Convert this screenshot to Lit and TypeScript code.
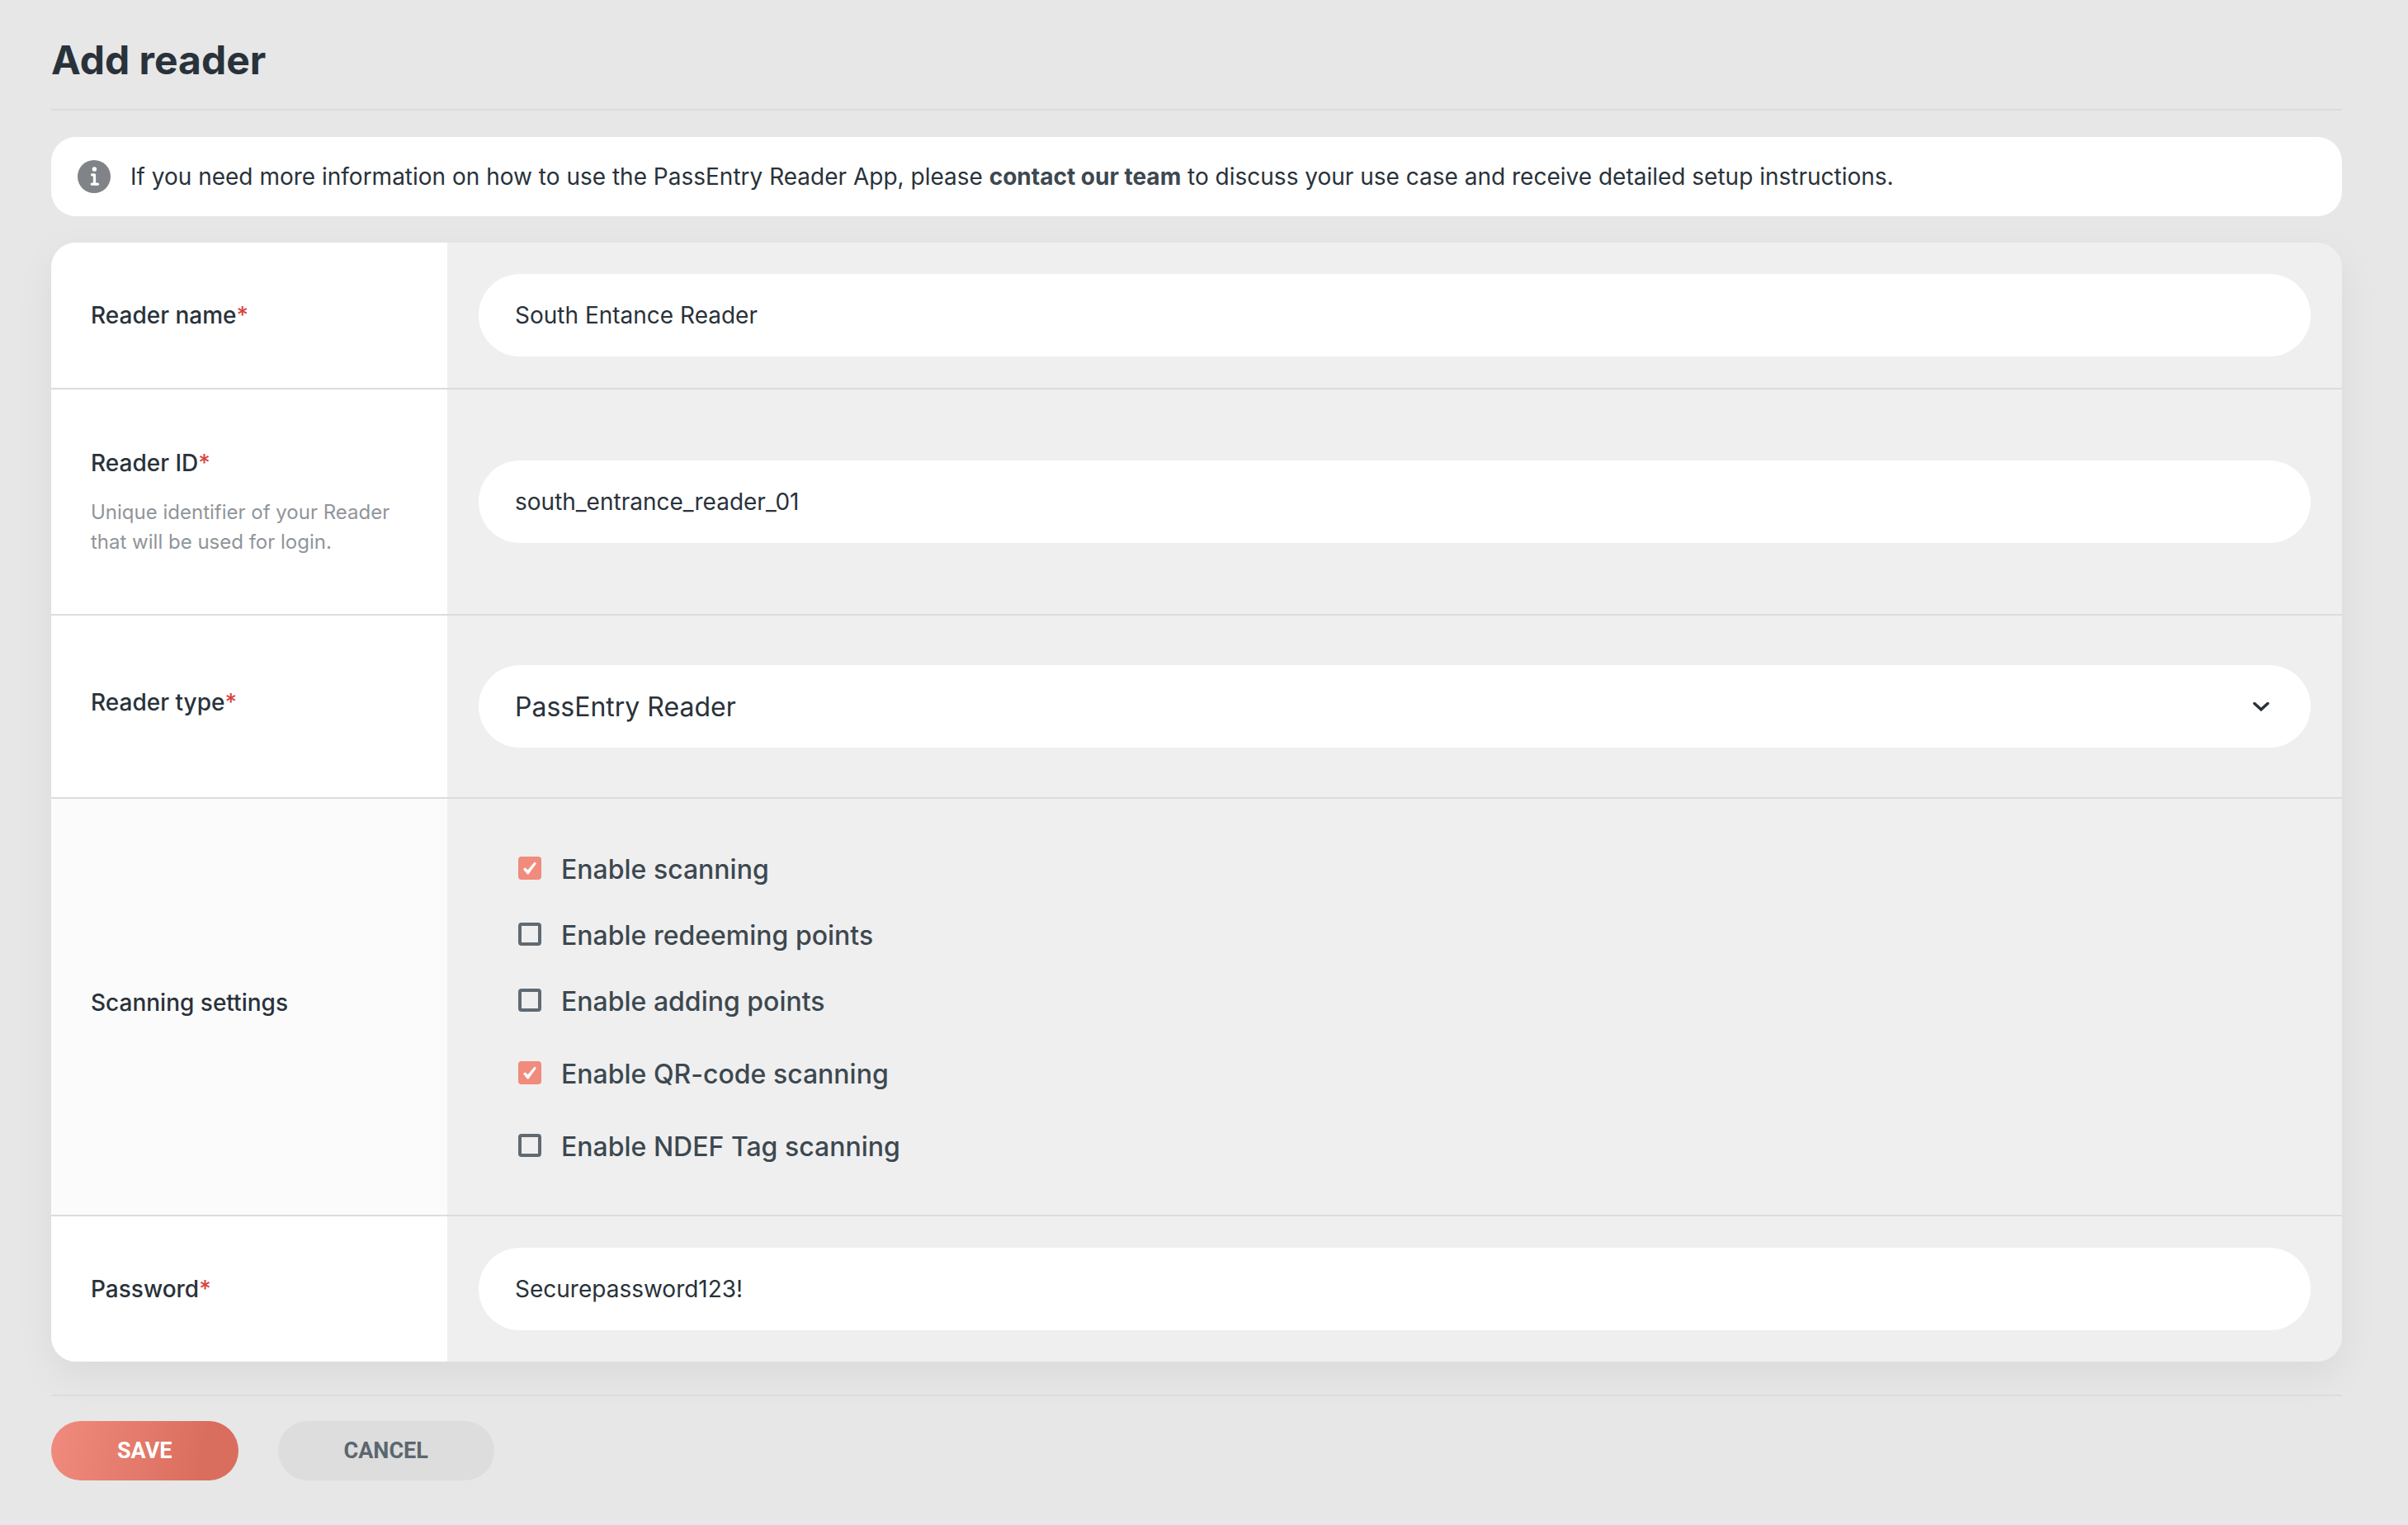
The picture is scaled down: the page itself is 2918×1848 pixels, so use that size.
import { LitElement, html, css, nothing } from "lit";
import { customElement } from "lit/decorators.js";

interface Option {
  id: string;
  label: string;
  checked: boolean;
}

@customElement("app-root")
export class AppRoot extends LitElement {
  private pointOptions: Option[] = [
    { id: "scan", label: "Enable scanning", checked: true },
    { id: "redeem", label: "Enable redeeming points", checked: false },
    { id: "add", label: "Enable adding points", checked: false },
  ];

  private tagOptions: Option[] = [
    { id: "qr", label: "Enable QR-code scanning", checked: true },
    { id: "ndef", label: "Enable NDEF Tag scanning", checked: false },
  ];

  static styles = css`
    :host {
      display: block;
      box-sizing: border-box;
      min-height: 100vh;
      padding: 40px 80px 54px 62px;
      background: #e7e7e7;
      color: #29323a;
      font-family: Inter, "Liberation Sans", sans-serif;
      font-size: 28px;
      line-height: 40px;
    }
    *,
    *::before {
      box-sizing: border-box;
    }
    .title {
      margin: 0;
      padding-bottom: 26px;
      border-bottom: 2px solid #dcdcdc;
      font-size: 48px;
      line-height: 66px;
      font-weight: 700;
    }
    .notice {
      display: flex;
      align-items: center;
      gap: 24px;
      margin: 32px 0;
      padding: 28px 32px;
      border-radius: 30px;
      background: #fff;
    }
    .notice-icon {
      flex: none;
      width: 40px;
      height: 40px;
    }
    .notice-text {
      margin: 0;
    }
    .notice-link {
      color: #3d4850;
      font-weight: 700;
      text-decoration: none;
    }
    .card {
      border-radius: 30px;
      overflow: hidden;
      background: #efefef;
      box-shadow: 0 16px 48px rgba(0, 0, 0, 0.06);
    }
    .row {
      display: grid;
      grid-template-columns: 480px 1fr;
    }
    .row + .row {
      border-top: 2px solid #dcdcdc;
    }
    .side {
      display: flex;
      flex-direction: column;
      justify-content: center;
      gap: 22px;
      padding: 0 48px;
      background: #fff;
    }
    .side.raised {
      padding-bottom: 10px;
    }
    .side.muted {
      background: #fbfbfb;
    }
    .label {
      font-weight: 500;
    }
    .required {
      color: #d9443f;
    }
    .hint {
      margin: 0;
      color: #8f959a;
      font-size: 24px;
      line-height: 36px;
    }
    .field {
      padding: 38px;
    }
    .field.tall {
      padding: 86px 38px;
    }
    .field.medium {
      padding: 60px 38px;
    }
    .control {
      display: block;
      width: 100%;
      height: 100px;
      margin: 0;
      padding: 0 44px;
      border: 0;
      border-radius: 50px;
      outline: none;
      background: #fff;
      color: #29323a;
      font-family: inherit;
      font-size: 28px;
      font-weight: 400;
    }
    .select-wrap {
      display: grid;
      align-items: center;
    }
    .select-wrap > * {
      grid-area: 1 / 1;
    }
    .select {
      appearance: none;
      font-size: 32px;
    }
    .chevron {
      justify-self: end;
      width: 20px;
      height: 12px;
      margin-right: 50px;
      pointer-events: none;
    }
    .options {
      display: flex;
      flex-direction: column;
      gap: 48px;
      padding: 66px 86px 62px;
    }
    .group {
      display: flex;
      flex-direction: column;
      gap: 40px;
    }
    .option {
      display: flex;
      align-items: flex-start;
      gap: 24px;
      font-size: 32px;
      font-weight: 500;
      color: #3d4850;
    }
    .box {
      appearance: none;
      display: grid;
      place-items: center;
      flex: none;
      width: 28px;
      height: 28px;
      margin: 4px 0 0;
      border: 4px solid #606a72;
      border-radius: 4px;
    }
    .box:checked {
      border-color: #f08b7d;
      background: #f08b7d;
    }
    .box:checked::before {
      content: "";
      width: 16px;
      height: 16px;
      background: #fff;
      clip-path: polygon(0 58%, 15% 46%, 35% 64%, 86% 3%, 100% 14%, 40% 97%, 31% 97%);
    }
    .actions {
      display: flex;
      gap: 48px;
      margin-top: 40px;
      padding-top: 30px;
      border-top: 2px solid #dcdcdc;
    }
    .button {
      height: 72px;
      padding: 0 80px;
      border: 0;
      border-radius: 36px;
      background: #dddddd;
      color: #5c666e;
      font-family: Roboto, "Liberation Sans", sans-serif;
      font-size: 27px;
      font-weight: 700;
    }
    .button.primary {
      background: linear-gradient(100deg, #f08b7d 0%, #da6e5e 80%);
      color: #fff;
    }
  `;

  private side(id: string, label: string, hint = "", modifier = "") {
    return html`<div class="side ${modifier}">
      <label class="label" for=${id}>${label}<span class="required">*</span></label>
      ${hint ? html`<p class="hint">${hint}</p>` : nothing}
    </div>`;
  }

  private option(o: Option) {
    return html`<label class="option">
      <input class="box" type="checkbox" name=${o.id} ?checked=${o.checked} />
      <span>${o.label}</span>
    </label>`;
  }

  render() {
    return html`
      <h1 class="title">Add reader</h1>
      <div class="notice">
        <svg class="notice-icon" viewBox="0 0 40 40" aria-hidden="true">
          <circle cx="20" cy="20" r="20" fill="#808488" />
          <circle cx="20.400" cy="11" r="2.700" fill="#fff" />
          <path d="M17.500 17.800H20.500V29M17.300 29.200H24.500" fill="none" stroke="#fff" stroke-width="3.200" stroke-linecap="round" stroke-linejoin="round" />
        </svg>
        <p class="notice-text">
          If you need more information on how to use the PassEntry Reader App, please
          <a class="notice-link" href="#contact">contact our team</a>
          to discuss your use case and receive detailed setup instructions.
        </p>
      </div>
      <form>
        <div class="card">
          <div class="row">
            ${this.side("name", "Reader name")}
            <div class="field"><input class="control" id="name" type="text" value="South Entance Reader" /></div>
          </div>
          <div class="row">
            ${this.side("reader-id", "Reader ID", "Unique identifier of your Reader that will be used for login.")}
            <div class="field tall"><input class="control" id="reader-id" type="text" value="south_entrance_reader_01" /></div>
          </div>
          <div class="row">
            ${this.side("type", "Reader type", "", "raised")}
            <div class="field medium select-wrap">
              <select class="control select" id="type"><option>PassEntry Reader</option></select>
              <svg class="chevron" viewBox="0 0 20 12" aria-hidden="true">
                <path d="M2 2.500L10 9.800L18 2.500" fill="none" stroke="#29323a" stroke-width="3.500" stroke-linecap="round" />
              </svg>
            </div>
          </div>
          <div class="row" role="group" aria-labelledby="scan-label">
            <div class="side raised muted"><span class="label" id="scan-label">Scanning settings</span></div>
            <div class="options">
              <div class="group">${this.pointOptions.map((o) => this.option(o))}</div>
              ${this.tagOptions.map((o) => this.option(o))}
            </div>
          </div>
          <div class="row">
            ${this.side("password", "Password")}
            <div class="field"><input class="control" id="password" type="text" value="Securepassword123!" /></div>
          </div>
        </div>
        <div class="actions">
          <button class="button primary" type="button">SAVE</button>
          <button class="button" type="button">CANCEL</button>
        </div>
      </form>
    `;
  }
}
